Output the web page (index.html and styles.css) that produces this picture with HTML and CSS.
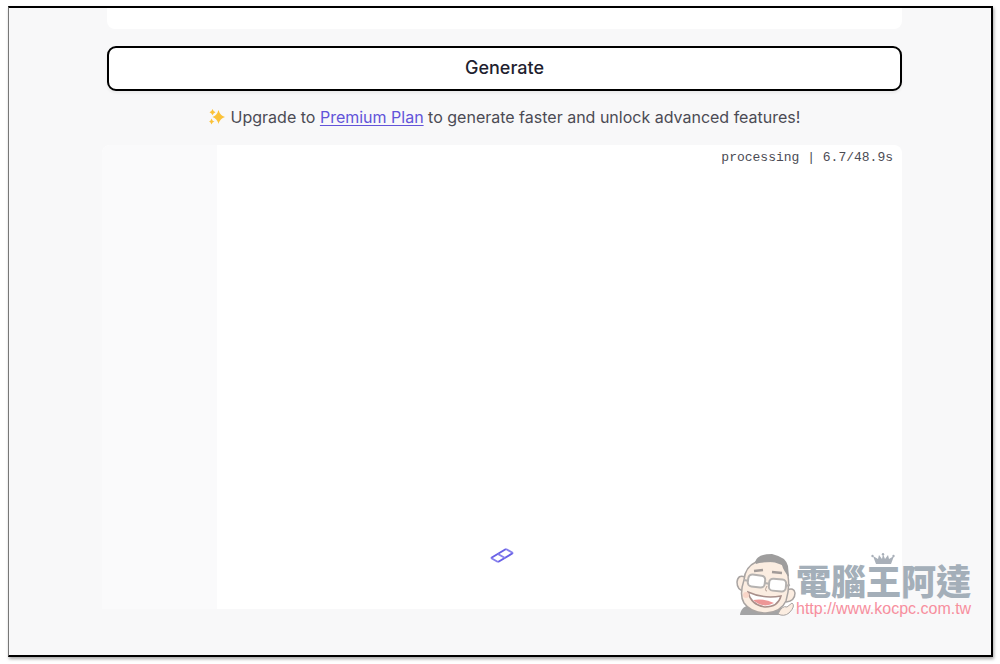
FILE: index.html
```html
<!DOCTYPE html>
<html lang="en">
<head>
    <meta charset="UTF-8">
    <meta name="viewport" content="width=device-width, initial-scale=1.0">
    <title>Generate</title>
    <link rel="stylesheet" href="styles.css">
</head>
<body>
    <div class="frame">
        <main class="content">
            <div class="options"></div>
            <button class="generate" type="button">Generate</button>
            <p class="upgrade">
                <svg class="sparkles" viewBox="0 0 16 16" aria-hidden="true">
                    <path d="M9.500 1Q11 6.500 16 8Q11 9.500 9.500 15Q8 9.500 3.500 8Q8 6.500 9.500 1Z"/>
                    <path d="M3.500 0Q4.200 2.500 6.500 3.200Q4.200 4 3.500 6.200Q2.800 4 .5 3.200Q2.800 2.500 3.500 0Z"/>
                    <path d="M2.500 9.500Q3.200 12 5.500 12.500Q3.200 13.200 2.500 15.500Q1.800 13.200 0 12.500Q1.800 12 2.500 9.500Z"/>
                </svg>
                <span>Upgrade to <a href="#">Premium Plan</a> to generate faster and unlock advanced features!</span>
            </p>
            <section class="output">
                <div class="progress"></div>
                <div class="status">processing | 6.7/48.9s</div>
                <svg class="loader" viewBox="0 0 26 18" aria-hidden="true">
                    <path class="edge" d="M2 11L17 2M9 15L24 6"/>
                    <path d="M2 11L9 15M9 7L16 11M17 2L24 6"/>
                </svg>
            </section>
        </main>

        <div class="watermark">
            <svg class="mascot" viewBox="0 0 60 64" aria-hidden="true">
                <path d="M4 62Q5 52 17 52L43 54Q49 55 49 62Z" fill="#a4a4a5"/>
                <path d="M42 61Q46 52 51 54L56 50Q60 53 53 60Q48 64 42 61Z" fill="#fbede1" stroke="#a9a4a2"/>
                <path d="M9 24Q2 21 1 29Q1 37 8 38M51 37Q58 34 59 40Q59 48 50 49" fill="#fbede1" stroke="#a9a4a2" stroke-width="1.500"/>
                <path d="M20 9Q9 14 8 27Q3 42 8 50Q15 60 30 60Q45 59 50 48Q54 35 52 23Q50 12 42 8Z" fill="#fbede1" stroke="#a9a4a2" stroke-width="1.500"/>
                <path d="M19 9Q21 1 36 1Q50 4 52 13L53 24Q47 17 46 12Q33 6 20 11Z" fill="#9e9d9d"/>
                <path d="M18 18L27 17M36 19L46 20" fill="none" stroke="#a29b98" stroke-width="2.500"/>
                <path d="M8 27L13 28M29 30L34 31M49 33L54 32" fill="none" stroke="#b5b2b0" stroke-width="2"/>
                <rect x="12" y="22" width="17" height="12" rx="4" transform="rotate(7 20 28)" fill="#fff" stroke="#b5b2b0" stroke-width="2"/>
                <rect x="33" y="26" width="17" height="12" rx="4" transform="rotate(5 41 32)" fill="#fff" stroke="#b5b2b0" stroke-width="2"/>
                <path d="M31 33Q28 38 31 38" fill="none" stroke="#b8a398"/>
                <path d="M12 39Q27 46 45 43Q42 54 29 54Q15 52 12 39Z" fill="#fff" stroke="#a9908b" stroke-width="1.500"/>
                <path d="M17 47Q27 45 38 50Q27 56 17 47Z" fill="#ed9696"/>
                <circle cx="10" cy="42" r="3" fill="#f9d5c7"/>
            </svg>
            <div class="brand">
                <svg class="crown" viewBox="0 0 24 12" aria-hidden="true">
                    <path d="M2 3L7 6L8 2L11 6L12 1L14 6L17 2L18 6L23 3L20 11H5Z"/>
                    <circle cx="1.500" cy="3" r="1.200"/>
                    <circle cx="12" cy="1.300" r="1.200"/>
                    <circle cx="22.500" cy="3" r="1.200"/>
                </svg>
                <div class="brand-name" lang="zh-Hant">電腦王阿達</div>
                <div class="brand-url">http://www.kocpc.com.tw</div>
            </div>
        </div>
    </div>
</body>
</html>
```
FILE: styles.css
```css
* {
    box-sizing: border-box;
}

body {
    margin: 0;
    background: #fff;
    color: #4b4b54;
    font-family: Inter, "Open Sans", sans-serif;
}

.frame {
    position: relative;
    min-height: calc(100vh - 13px);
    margin: 6px 7px 7px 8px;
    border: 2px solid #000;
    border-left: 1px solid #777;
    background: #f8f8f9;
    box-shadow: 1px 2px 3px rgba(0, 0, 0, 0.35);
}

body,
.frame {
    display: flow-root;
}

.content {
    margin: 0 89px 0 98px;
}

.options {
    height: 21px;
    background: #fff;
    border-radius: 0 0 8px 8px;
}

.generate {
    display: block;
    width: 100%;
    height: 45px;
    margin-top: 17px;
    padding: 0 0 2px;
    border: 2px solid #000;
    border-radius: 9px;
    background: #fff;
    box-shadow: 0 2px 3px rgba(0, 0, 0, 0.06);
    color: #1f1f30;
    font-family: inherit;
    font-size: 18px;
    font-weight: 500;
    cursor: pointer;
}

.upgrade {
    display: flex;
    justify-content: center;
    align-items: center;
    gap: 6px;
    margin: 15px 0 17px;
    font-size: 16px;
    line-height: 22px;
}

.upgrade a {
    color: #6254d9;
    text-underline-offset: 2px;
}

.sparkles {
    width: 16px;
    height: 16px;
    fill: #fbc239;
}

/* Output panel, progress fills it from the left */
.output {
    position: relative;
    display: flex;
    flex-direction: column;
    justify-content: space-between;
    min-height: 464px;
    margin-left: -5px;
    border-radius: 8px 8px 0 0;
    background: #fff;
}

.progress {
    position: absolute;
    top: 0;
    bottom: 0;
    left: 0;
    width: 115px;
    border-radius: 8px 0 0;
    background: #fafafb;
}

.status {
    padding: 4px 9px;
    font-family: "Liberation Mono", monospace;
    font-size: 13px;
    line-height: 18px;
    text-align: right;
}

.loader {
    align-self: center;
    width: 26px;
    height: 18px;
    margin-bottom: 44px;
    fill: none;
    stroke: #8781ed;
    stroke-width: 2;
}

.loader .edge {
    stroke: #6860e6;
}

.watermark {
    position: absolute;
    right: 20px;
    bottom: 38px;
    display: flex;
    align-items: flex-end;
}

.mascot {
    width: 60px;
    height: 64px;
}

.brand {
    position: relative;
    width: 175px;
    white-space: nowrap;
}

.brand-name {
    margin-bottom: 2px;
    color: #a4afb9;
    font-family: "Noto Sans CJK TC", sans-serif;
    font-size: 35px;
    font-weight: 900;
    line-height: 38px;
}

.brand-url {
    color: #f78f9e;
    font-family: "Liberation Sans", sans-serif;
    font-size: 16px;
    line-height: 16px;
}

.crown {
    position: absolute;
    top: -8px;
    left: 75px;
    width: 24px;
    height: 12px;
    fill: #a9b0b9;
}
```
